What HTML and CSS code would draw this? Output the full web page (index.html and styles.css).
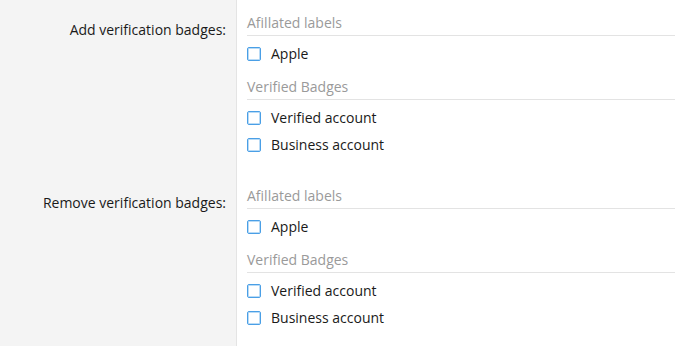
FILE: index.html
```html
<!DOCTYPE html>
<html lang="en">
<head>
    <meta charset="UTF-8">
    <meta name="viewport" content="width=device-width, initial-scale=1.0">
    <title>Verification badges</title>
    <link rel="stylesheet" href="styles.css">
</head>
<body>

    <div class="settings">
        <div class="setting-label">Add verification badges:</div>
        <div class="setting-body">
            <div class="group-title">Afillated labels</div>
            <div class="options">
                <label class="option"><span class="box"></span>Apple</label>
            </div>
            <div class="group-title">Verified Badges</div>
            <div class="options">
                <label class="option"><span class="box"></span>Verified account</label>
                <label class="option"><span class="box"></span>Business account</label>
            </div>
        </div>

        <div class="setting-label">Remove verification badges:</div>
        <div class="setting-body">
            <div class="group-title">Afillated labels</div>
            <div class="options">
                <label class="option"><span class="box"></span>Apple</label>
            </div>
            <div class="group-title">Verified Badges</div>
            <div class="options">
                <label class="option"><span class="box"></span>Verified account</label>
                <label class="option"><span class="box"></span>Business account</label>
            </div>
        </div>
    </div>

</body>
</html>
```

FILE: styles.css
```css
body {
    font-family: 'Open Sans', 'Noto Sans', sans-serif;
    font-size: 14px;
    color: #1a1a1a;
    margin: 0;
    background: white;
}
.settings {
    display: grid;
    grid-template-columns: 237px 1fr;
    grid-template-rows: auto 1fr;
    min-height: 100vh;
}
.setting-label {
    background: #f4f4f4;
    border-right: 1px solid #e4e4e4;
    text-align: right;
    padding: 20px 10px 0 0;
    line-height: 20px;
}
.setting-body {
    padding: 13px 0 15px 10px;
}
.group-title {
    color: #9a9a9a;
    line-height: 20px;
    padding-bottom: 2px;
    border-bottom: 1px solid #e3e3e3;
}
.options {
    margin: 4px 0 10px;
}
.options:last-child { margin-bottom: 0; }
.option {
    display: flex;
    align-items: center;
    gap: 10px;
    height: 27px;
    cursor: pointer;
}
.box {
    width: 12px;
    height: 12px;
    border: 1px solid #4a9fe6;
    border-radius: 2px;
    box-shadow: inset 0 0 0 1px #b9dbf6;
    background: white;
}
```
